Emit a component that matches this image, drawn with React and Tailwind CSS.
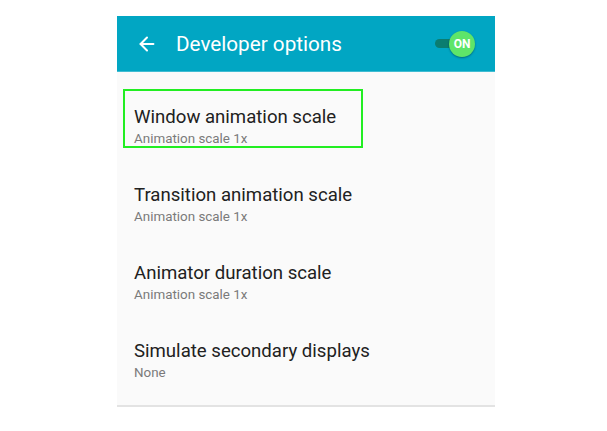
import { ArrowLeft } from 'lucide-react'

const items = [
  { title: 'Window animation scale', sub: 'Animation scale 1x' },
  { title: 'Transition animation scale', sub: 'Animation scale 1x' },
  { title: 'Animator duration scale', sub: 'Animation scale 1x' },
  { title: 'Simulate secondary displays', sub: 'None' }
]

export default function App() {
  return (
    <div className="w-[607px] h-[431px] bg-white pt-[16px] pl-[117px]" style={{ fontFamily: 'Roboto, "Noto Sans", sans-serif' }}>
      <div className="w-[378px]">
        {/* Toolbar */}
        <div className="h-[56px] bg-[#01a6c3] flex items-center border-b border-[#3fbcd2]">
          <ArrowLeft className="w-[22px] h-[22px] text-white ml-[19px] mt-[1px]" strokeWidth={2.2} />
          <span className="ml-[18px] mt-[2px] text-[20.7px] text-white">Developer options</span>
          <div className="ml-auto mr-[20px] relative w-[40px] h-[26px] flex items-center">
            <div className="w-[26px] h-[9px] rounded-full bg-[#0b7d70]" />
            <div className="absolute right-0 top-0 w-[26px] h-[26px] rounded-full bg-[#5ee569] shadow-[0_1px_2px_rgba(0,0,0,0.35)] flex items-center justify-center">
              <span className="text-white text-[12px] font-bold">ON</span>
            </div>
          </div>
        </div>

        {/* List */}
        <div className="bg-[#fafafa] pt-[15px] pb-[6px] border-b-2 border-[#e3e3e3]">
          {items.map((item, i) => (
            <div key={i} className="relative h-[78px] flex flex-col justify-center pl-[17px] pt-[2px]">
              {i === 0 && (
                <div className="absolute left-[6px] top-[2px] w-[240px] h-[59px] border-2 border-[#22ee22]" />
              )}
              <span className="text-[18.6px] leading-[22px] text-[#212121]">{item.title}</span>
              <span className="text-[13.4px] leading-[18px] mt-[2px] text-[#7a7a7a]">{item.sub}</span>
            </div>
          ))}
        </div>
      </div>
    </div>
  )
}
